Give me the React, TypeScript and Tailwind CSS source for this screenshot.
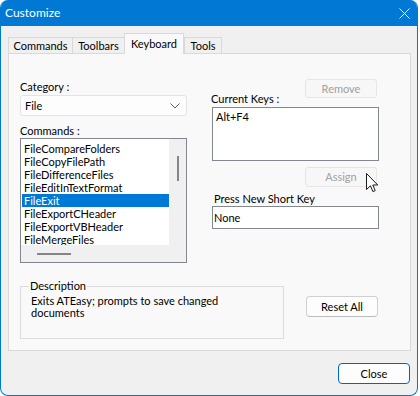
import React from "react";

const commands = [
  "FileCompareFolders",
  "FileCopyFilePath",
  "FileDifferenceFiles",
  "FileEditInTextFormat",
  "FileExit",
  "FileExportCHeader",
  "FileExportVBHeader",
  "FileMergeFiles",
];

function Tab({ label, selected, w }: { label: string; selected?: boolean; w: string }) {
  return selected ? (
    <div className={`${w} relative z-10 -mb-px flex h-[21px] items-start justify-center border-x border-t border-[#d9d9d9] bg-[#f9f9f9] pt-[3px] leading-[14px]`}>
      {label}
    </div>
  ) : (
    <div className={`${w} flex h-[16px] items-start justify-center border-l border-t border-[#d9d9d9] bg-[#f0f0f0] pt-[1px] leading-[14px] last:border-r`}>
      {label}
    </div>
  );
}

function Cursor() {
  return (
    <svg className="absolute left-[60px] top-[5px]" width="13" height="20" viewBox="0 0 13 20">
      <path
        d="M0.5 0.5 L0.5 16.5 L4.4 12.8 L6.9 18.6 L9.2 17.6 L6.8 12 L11.8 12 Z"
        fill="#ffffff"
        stroke="#1a1a1a"
        strokeWidth="1"
        strokeLinejoin="round"
      />
    </svg>
  );
}

export default function App() {
  return (
    <div className="h-[396px] w-[420px] bg-white font-['Lato',sans-serif] text-[11px] text-black">
      <div className="flex h-[396px] w-[418px] flex-col overflow-hidden rounded-[8px] border-x border-b border-[#0078d4] bg-[#f0f0f0]">
        {/* title bar */}
        <div className="flex h-[26px] shrink-0 items-center justify-between bg-[#0078d4] pl-[4px] pr-[7px] text-[12px] text-white">
          <span className="leading-[16px]">Customize</span>
          <svg width="11" height="11" viewBox="0 0 11 11">
            <path d="M0.5 0.5 L10.5 10.5 M10.5 0.5 L0.5 10.5" stroke="#ffffff" strokeWidth="1" />
          </svg>
        </div>

        {/* body */}
        <div className="flex flex-col pl-[7px] pt-[7px]">
          {/* tabs */}
          <div className="flex h-[20px] items-end">
            <Tab label="Commands" w="w-[64px]" />
            <Tab label="Toolbars" w="w-[52px]" />
            <Tab label="Keyboard" w="w-[60px]" selected />
            <Tab label="Tools" w="w-[38px]" />
          </div>

          {/* panel */}
          <div className="flex h-[298px] w-[403px] flex-col border border-[#d9d9d9] bg-[#f9f9f9] px-[11px] pt-[25px]">
            <div className="flex gap-[24px]">
              {/* left column */}
              <div className="flex w-[167px] flex-col pt-[1px]">
                <div className="h-[14px] leading-[14px]">Category :</div>
                <div className="mt-[1px] flex h-[21px] items-center justify-between rounded-[3px] border border-[#e3e3e3] bg-[#fdfdfd] pl-[4px] pr-[6px]">
                  <span className="leading-[14px]">File</span>
                  <svg width="10" height="6" viewBox="0 0 10 6">
                    <path d="M0.5 0.5 L5 5 L9.5 0.5" fill="none" stroke="#606060" strokeWidth="1" />
                  </svg>
                </div>
                <div className="mt-[8px] h-[14px] leading-[14px]">Commands :</div>
                <div className="flex h-[125px] flex-col border border-[#828790] bg-white">
                  <div className="flex h-[106px]">
                    <div className="flex w-[148px] flex-col overflow-hidden pl-[1px] pt-[3px]">
                      {commands.map((c) => (
                        <div
                          key={c}
                          className={
                            c === "FileExit"
                              ? "h-[13px] shrink-0 bg-[#0078d7] pl-[2px] leading-[13px] text-white"
                              : "h-[13px] shrink-0 pl-[2px] leading-[13px]"
                          }
                        >
                          {c}
                        </div>
                      ))}
                    </div>
                    <div className="flex w-[17px] justify-center bg-[#f0f0f0] pl-[1px] pt-[17px]">
                      <div className="h-[25px] w-[2px] bg-[#858585]" />
                    </div>
                  </div>
                  <div className="flex h-[17px] bg-[#f0f0f0]">
                    <div className="flex w-[148px] items-center pl-[16px] pt-[1px]">
                      <div className="h-[2px] w-[34px] bg-[#858585]" />
                    </div>
                  </div>
                </div>
              </div>

              {/* right column */}
              <div className="flex w-[168px] flex-col">
                <div className="flex h-[28px] justify-between">
                  <div className="mb-[1px] self-end leading-[14px]">Current Keys :</div>
                  <div className="mr-[2px] flex h-[19px] w-[72px] items-center justify-center rounded-[3px] border border-[#e6e6e6] bg-[#f7f7f7] leading-[14px] text-[#a0a0a0]">
                    Remove
                  </div>
                </div>
                <div className="ml-[1px] h-[54px] w-[167px] border border-[#828790] bg-white pl-[3px] pt-[2px] leading-[14px]">
                  Alt+F4
                </div>
                <div className="relative mr-[2px] mt-[6px] flex h-[20px] w-[72px] items-center justify-center self-end rounded-[3px] border border-[#e6e6e6] bg-[#f7f7f7] leading-[14px] text-[#a0a0a0]">
                  Assign
                  <Cursor />
                </div>
                <div className="mt-[5px] h-[14px] pl-[3px] leading-[14px]">Press New Short Key</div>
                <div className="ml-[1px] flex h-[23px] w-[167px] items-center border border-[#828790] bg-white pl-[1px] leading-[14px]">
                  None
                </div>
              </div>
            </div>

            {/* bottom row */}
            <div className="mt-[16px] flex gap-[22px]">
              <fieldset className="h-[60px] w-[264px] border border-[#dcdcdc] pl-[10px]">
                <legend className="ml-[-2px] px-[1px] leading-[14px]">Description</legend>
                <div className="w-[200px] pt-[2px] leading-[12px]">
                  Exits ATEasy; prompts to save changed documents
                </div>
              </fieldset>
              <div className="mt-[17px] flex h-[21px] w-[72px] items-center justify-center rounded-[4px] border border-[#d0d0d0] border-b-[#bcbcbc] bg-[#fdfdfd] leading-[14px]">
                Reset All
              </div>
            </div>
          </div>

          {/* footer */}
          <div className="flex w-[403px] justify-end pr-[1px] pt-[12px]">
            <div className="flex h-[21px] w-[72px] items-center justify-center rounded-[4px] border border-[#0067c0] bg-[#fdfdfd] leading-[14px]">
              Close
            </div>
          </div>
        </div>
      </div>
    </div>
  );
}
